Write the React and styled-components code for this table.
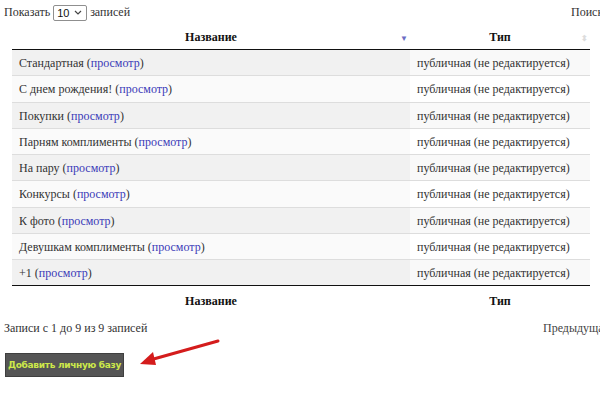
import React from 'react'
import styled, { createGlobalStyle } from 'styled-components'

const GlobalStyle = createGlobalStyle`
    html, body {
        margin: 0;
        padding: 0;
        background: #fff;
    }
    body {
        font-family: "Liberation Serif", "Times New Roman", serif;
        font-size: 12px;
        color: #333;
    }
`

const Page = styled.div`
    position: relative;
    width: 600px;
    height: 398px;
    overflow: hidden;
    font-family: "Liberation Serif", "Times New Roman", serif;
    font-size: 12px;
`

const Wrapper = styled.div`
    width: 620px;
    padding: 4px 0 0 4px;
`

const TopBar = styled.div`
    display: flex;
    justify-content: space-between;
    align-items: center;
    height: 17px;
`

const Length = styled.label`
    display: flex;
    align-items: center;
    gap: 3px;
`

const Select = styled.span`
    display: inline-flex;
    align-items: center;
    justify-content: space-between;
    width: 34px;
    height: 16px;
    box-sizing: border-box;
    border: 1px solid #8f8f8f;
    border-radius: 2px;
    padding: 0 4px 0 3px;
    font-family: "Liberation Sans", Arial, sans-serif;
    font-size: 11px;
    color: #111;
`

const Search = styled.span`
    width: 53px;
    white-space: nowrap;
`

const Table = styled.table`
    width: 578px;
    margin: 7px 0 0 8px;
    border-collapse: collapse;
    border-spacing: 0;
`

const Th = styled.th`
    position: relative;
    height: ${p => (p.$foot ? '31px' : '18px')};
    padding: 0 6px ${p => (p.$foot ? '0' : '3px')};
    font-size: 12px;
    font-weight: bold;
    color: #111;
    text-align: center;
    border-${p => (p.$foot ? 'top' : 'bottom')}: 1px solid #111;
    width: ${p => p.$w || 'auto'};
`

const SortIcon = styled.span`
    position: absolute;
    right: 2px;
    top: 50%;
    transform: translateY(-45%);
    font-size: 8px;
    color: ${p => (p.$active ? '#6c6cc4' : '#ddd')};
    line-height: 1;
`

const Tr = styled.tr`
    background: ${p => (p.$odd ? '#f9f9f9' : '#fff')};
`

const Td = styled.td`
    height: 26.25px;
    box-sizing: border-box;
    padding: 2px 7px 0;
    border-top: ${p => (p.$first ? 'none' : '1px solid #ddd')};
    color: #333;
    background: ${p => (p.$sorted ? (p.$odd ? '#f1f1f1' : '#fafafa') : 'transparent')};
`

const Link = styled.a`
    color: #3a3ab8;
    text-decoration: none;
`

const Info = styled.div`
    display: flex;
    justify-content: space-between;
    margin-top: 4px;
`

const Paginate = styled.span`
    color: #444;
    width: 81px;
    white-space: nowrap;
`

const AddButton = styled.button`
    margin: 17px 0 0 1px;
    height: 24px;
    padding: 0 2px;
    background: #555;
    border: 1px solid #3f3f3f;
    color: #cde84a;
    font-family: Verdana, "DejaVu Sans", sans-serif;
    font-weight: bold;
    font-size: 9px;
    letter-spacing: -0.3px;
`

const Arrow = styled.svg`
    position: absolute;
    left: 136px;
    top: 337px;
`

const rows = [
    'Стандартная',
    'С днем рождения!',
    'Покупки',
    'Парням комплименты',
    'На пару',
    'Конкурсы',
    'К фото',
    'Девушкам комплименты',
    '+1',
]

export default function App() {
    return (
        <Page>
            <GlobalStyle />
            <Wrapper>
                <TopBar>
                    <Length>
                        Показать
                        <Select>
                            10
                            <svg width="8" height="5" viewBox="0 0 8 5">
                                <path d="M1 1 L4 4 L7 1" fill="none" stroke="#444" strokeWidth="1.2" />
                            </svg>
                        </Select>
                        записей
                    </Length>
                    <Search>Поиск:</Search>
                </TopBar>

                <Table>
                    <thead>
                        <tr>
                            <Th $w="386px">
                                Название
                                <SortIcon $active>▼</SortIcon>
                            </Th>
                            <Th>
                                Тип
                                <SortIcon>⬍</SortIcon>
                            </Th>
                        </tr>
                    </thead>
                    <tbody>
                        {rows.map((name, i) => {
                            const odd = i % 2 === 0
                            return (
                                <Tr key={name} $odd={odd}>
                                    <Td $sorted $odd={odd} $first={i === 0}>
                                        {name} (<Link href="#">просмотр</Link>)
                                    </Td>
                                    <Td $first={i === 0}>публичная (не редактируется)</Td>
                                </Tr>
                            )
                        })}
                    </tbody>
                    <tfoot>
                        <tr>
                            <Th $foot>Название</Th>
                            <Th $foot>Тип</Th>
                        </tr>
                    </tfoot>
                </Table>

                <Info>
                    <span>Записи с 1 до 9 из 9 записей</span>
                    <Paginate>Предыдущая</Paginate>
                </Info>

                <AddButton>Добавить личную базу</AddButton>
            </Wrapper>

            <Arrow width="86" height="32" viewBox="0 0 86 32">
                <line x1="82" y1="4" x2="14" y2="23" stroke="#d41c1c" strokeWidth="3" strokeLinecap="round" />
                <path d="M4 27 L17 15 L20 28 Z" fill="#d41c1c" />
            </Arrow>
        </Page>
    )
}
